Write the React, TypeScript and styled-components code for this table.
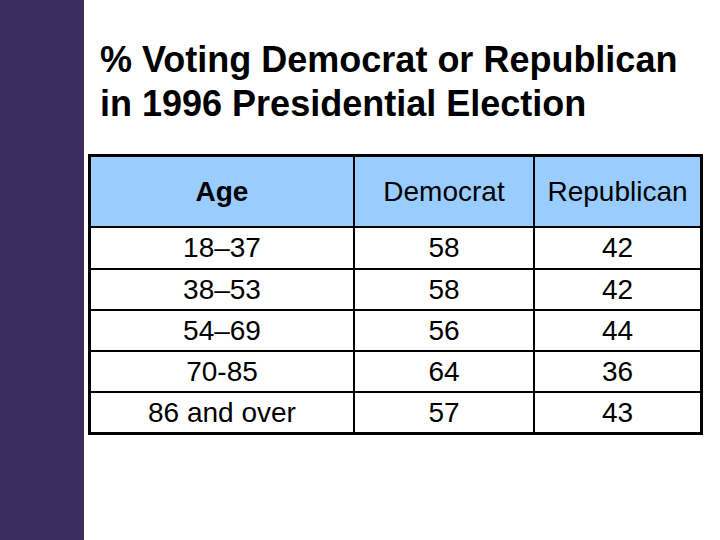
import styled, { createGlobalStyle } from "styled-components";

const GlobalStyle = createGlobalStyle`
  html, body {
    margin: 0;
    padding: 0;
    background: #ffffff;
  }
  body {
    font-family: "Liberation Sans", Arial, sans-serif;
    color: #000000;
  }
`;

const rows = [
  { age: "18–37", dem: 58, rep: 42 },
  { age: "38–53", dem: 58, rep: 42 },
  { age: "54–69", dem: 56, rep: 44 },
  { age: "70-85", dem: 64, rep: 36 },
  { age: "86 and over", dem: 57, rep: 43 },
];

const App = () => {
  return (
    <>
      <GlobalStyle />
      <Slide>
        <Sidebar />
        <Content>
          <Title>
            % Voting Democrat or Republican
            <br />
            in 1996 Presidential Election
          </Title>
          <Table>
            <colgroup>
              <col style={{ width: 264 }} />
              <col style={{ width: 180 }} />
              <col style={{ width: 165 }} />
            </colgroup>
            <thead>
              <tr>
                <HeadCell $bold>Age</HeadCell>
                <HeadCell>Democrat</HeadCell>
                <HeadCell $last>Republican</HeadCell>
              </tr>
            </thead>
            <tbody>
              {rows.map((r, i) => {
                const lastRow = i === rows.length - 1;
                return (
                  <tr key={r.age}>
                    <Cell $lastRow={lastRow} $first={i === 0}>{r.age}</Cell>
                    <Cell $lastRow={lastRow} $first={i === 0}>{r.dem}</Cell>
                    <Cell $lastRow={lastRow} $first={i === 0} $last>{r.rep}</Cell>
                  </tr>
                );
              })}
            </tbody>
          </Table>
        </Content>
      </Slide>
    </>
  );
};

export default App;

const Slide = styled.div`
  display: flex;
  width: 720px;
  height: 540px;
  overflow: hidden;
`;

const Sidebar = styled.div`
  width: 84px;
  flex: none;
  background-color: #3b2d5f;
`;

const Content = styled.div`
  flex: 1;
  padding: 38px 0 0 4px;
`;

const Title = styled.h1`
  margin: 0 0 28px 12px;
  font-size: 36px;
  line-height: 44px;
  font-weight: bold;
`;

const Table = styled.table`
  width: 615px;
  border: 3px solid #000;
  border-collapse: separate;
  border-spacing: 0;
  table-layout: fixed;
  font-size: 28px;
`;

const HeadCell = styled.th<{ $bold?: boolean; $last?: boolean }>`
  height: 69px;
  padding: 0;
  background-color: #99ccff;
  font-weight: ${(p) => (p.$bold ? "bold" : "normal")};
  text-align: center;
  vertical-align: middle;
  border-right: ${(p) => (p.$last ? "none" : "2px solid #000")};
  border-bottom: 2px solid #000;
`;

const Cell = styled.td<{ $last?: boolean; $lastRow?: boolean; $first?: boolean }>`
  height: ${(p) => (p.$first ? "40px" : "39px")};
  padding: 0;
  text-align: center;
  vertical-align: middle;
  line-height: 1;
  border-right: ${(p) => (p.$last ? "none" : "2px solid #000")};
  border-bottom: ${(p) => (p.$lastRow ? "none" : "2px solid #000")};
`;
